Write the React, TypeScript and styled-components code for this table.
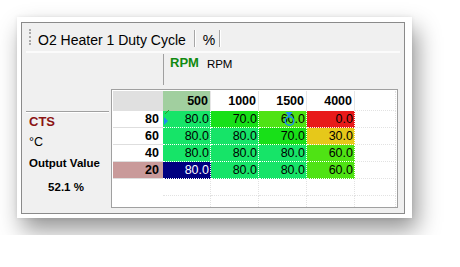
import React from "react";
import styled, { createGlobalStyle } from "styled-components";

const GlobalStyle = createGlobalStyle`
  html, body {
    margin: 0;
    padding: 0;
    background: #ffffff;
  }
  body {
    font-family: "Liberation Sans", Arial, sans-serif;
  }
`;

const Page = styled.div`
  padding: 17px;
`;

const Frame = styled.div`
  box-sizing: border-box;
  width: 395px;
  height: 201px;
  padding: 5px 7px 4px 4px;
  background: #ffffff;
  box-shadow: 5px 12px 22px rgba(0, 0, 0, 0.42), 0 0 4px rgba(0, 0, 0, 0.08);
`;

const Panel = styled.div`
  box-sizing: border-box;
  height: 192px;
  border: 1px solid #8a8a8a;
  background: #f0f0f0;
  display: flex;
  flex-direction: column;
`;

const Toolbar = styled.div`
  box-sizing: border-box;
  height: 30px;
  margin: 0 4px 0 4px;
  padding: 6px 0 0 3px;
  display: flex;
  align-items: flex-start;
  border-bottom: 2px solid #fbfbfb;
`;

const Grip = styled.span`
  width: 0;
  height: 16px;
  border-left: 2px dotted #a9a9a9;
`;

const ToolLabel = styled.span<{ $first?: boolean }>`
  margin-top: 3px;
  padding: 0 ${(p) => (p.$first ? "8px" : "4px")} 0 7px;
  font-size: 14px;
  line-height: 16px;
  color: #000;
  white-space: nowrap;
`;

const ToolSep = styled.span`
  margin-top: 1px;
  width: 1px;
  height: 17px;
  background: #a6a6a6;
  border-right: 1px solid #ffffff;
`;

const Body = styled.div`
  display: grid;
  grid-template-columns: 85px 287px;
  margin-left: 4px;
`;

const Side = styled.div`
  display: flex;
  flex-direction: column;
  padding-top: 58px;
`;

const SideRule = styled.div`
  width: 83px;
  border-top: 1px solid #a0a0a0;
  border-bottom: 1px solid #ffffff;
`;

const AxisName = styled.div`
  margin: 1px 0 0 3px;
  font-size: 13px;
  line-height: 16px;
  font-weight: bold;
  color: #8b1414;
`;

const Unit = styled.div`
  margin: 4px 0 0 3px;
  font-size: 12.5px;
  line-height: 16px;
  color: #000;
`;

const OutLabel = styled.div`
  margin: 5px 0 0 3px;
  font-size: 11.5px;
  line-height: 16px;
  font-weight: bold;
  color: #000;
  white-space: nowrap;
`;

const OutValue = styled.div`
  width: 80px;
  margin-top: 8px;
  text-align: center;
  font-size: 11.5px;
  line-height: 16px;
  font-weight: bold;
  color: #000;
`;

const Main = styled.div`
  display: flex;
  flex-direction: column;
`;

const XAxis = styled.div`
  height: 36px;
  display: flex;
  align-items: flex-start;
  padding-left: 52px;
`;

const XLine = styled.span`
  width: 1px;
  height: 31px;
  margin-top: 1px;
  background: #a0a0a0;
`;

const XName = styled.span`
  margin: 2px 0 0 6px;
  font-size: 13px;
  line-height: 16px;
  font-weight: bold;
  color: #118a11;
`;

const XUnit = styled.span`
  margin: 3px 0 0 8px;
  font-size: 11.5px;
  line-height: 16px;
  color: #000;
`;

const GridBox = styled.div`
  position: relative;
  box-sizing: border-box;
  height: 119px;
  border: 1px solid #a0a0a0;
  padding: 1px;
  background: #ffffff;
  overflow: hidden;
`;

const Grid = styled.div`
  display: grid;
  grid-template-columns: 50px 48px 48px 48px 48px 1fr;
  grid-template-rows: 20px repeat(5, 17px) 17px;
`;

type CellKind = "corner" | "colHead" | "rowHead" | "data" | "empty";

const Cell = styled.div<{ $kind: CellKind; $bg?: string; $fg?: string }>`
  box-sizing: border-box;
  display: flex;
  align-items: center;
  justify-content: flex-end;
  padding-right: ${(p) => (p.$kind === "rowHead" ? "4px" : p.$kind === "colHead" ? "2px" : "1px")};
  font-size: 12.5px;
  font-weight: ${(p) => (p.$kind === "colHead" || p.$kind === "rowHead" ? "bold" : "normal")};
  color: ${(p) => p.$fg || "#000"};
  background: ${(p) =>
    p.$bg || (p.$kind === "corner" ? "#e0e0e0" : "#ffffff")};
  border-right: ${(p) =>
    p.$kind === "data"
      ? "1px dotted #ffffff"
      : p.$kind === "empty"
      ? "1px dotted #e2e2e2"
      : p.$kind === "colHead"
      ? "1px solid #e6e6e6"
      : "none"};
  border-bottom: ${(p) =>
    p.$kind === "data"
      ? "1px dotted #ffffff"
      : p.$kind === "empty"
      ? "1px dotted #e2e2e2"
      : p.$kind === "rowHead"
      ? "1px solid #dedede"
      : "none"};
`;

const Blank = styled.div`
  background: #ffffff;
`;

const Overlay = styled.svg`
  position: absolute;
  left: 0;
  top: 0;
  pointer-events: none;
`;

const cellColour: Record<string, string> = {
  "80.0": "#16e468",
  "70.0": "#18e018",
  "60.0": "#4fe314",
  "30.0": "#e6c81a",
  "0.0": "#e81a1a",
};

const columns = ["500", "1000", "1500", "4000"];
const rows: { load: string; values: string[] }[] = [
  { load: "80", values: ["80.0", "70.0", "60.0", "0.0"] },
  { load: "60", values: ["80.0", "80.0", "70.0", "30.0"] },
  { load: "40", values: ["80.0", "80.0", "80.0", "60.0"] },
  { load: "20", values: ["80.0", "80.0", "80.0", "60.0"] },
];

const activeCol = 0;
const activeRow = 3;

export default function App() {
  return (
    <>
      <GlobalStyle />
      <Page>
        <Frame>
          <Panel>
            <Toolbar>
              <Grip />
              <ToolLabel $first>O2 Heater 1 Duty Cycle</ToolLabel>
              <ToolSep />
              <ToolLabel>%</ToolLabel>
              <ToolSep />
            </Toolbar>
            <Body>
              <Side>
                <SideRule />
                <AxisName>CTS</AxisName>
                <Unit>°C</Unit>
                <OutLabel>Output Value</OutLabel>
                <OutValue>52.1 %</OutValue>
              </Side>
              <Main>
                <XAxis>
                  <XLine />
                  <XName>RPM</XName>
                  <XUnit>RPM</XUnit>
                </XAxis>
                <GridBox>
                  <Grid>
                    <Cell $kind="corner" />
                    {columns.map((c, i) => (
                      <Cell
                        key={c}
                        $kind="colHead"
                        $bg={i === activeCol ? "#a1cf9f" : undefined}
                      >
                        {c}
                      </Cell>
                    ))}
                    <Cell $kind="empty" />
                    {rows.map((r, ri) => (
                      <React.Fragment key={r.load}>
                        <Cell
                          $kind="rowHead"
                          $bg={ri === activeRow ? "#c99a9a" : undefined}
                        >
                          {r.load}
                        </Cell>
                        {r.values.map((v, ci) => {
                          const selected = ri === activeRow && ci === activeCol;
                          return (
                            <Cell
                              key={ci}
                              $kind="data"
                              $bg={selected ? "#000080" : cellColour[v]}
                              $fg={selected ? "#ffffff" : undefined}
                            >
                              {v}
                            </Cell>
                          );
                        })}
                        <Cell $kind="empty" />
                      </React.Fragment>
                    ))}
                    {[0, 1].map((k) => (
                      <React.Fragment key={k}>
                        <Blank />
                        {[0, 1, 2, 3, 4].map((j) => (
                          <Cell key={j} $kind="empty" />
                        ))}
                      </React.Fragment>
                    ))}
                  </Grid>
                  <Overlay width="285" height="117">
                    {/* live operating point markers */}
                    <path d="M53 24 L57 20" stroke="#2a9a2a" strokeWidth="1" fill="none" />
                    <polygon points="52,27 56,31 52,35" fill="#1e8cf0" />
                    <polygon points="173.5,22 180.5,22 177,27" fill="#1e8cf0" />
                    <circle cx="177.5" cy="31" r="4.3" stroke="#1e8cf0" strokeWidth="1.6" fill="none" />
                  </Overlay>
                </GridBox>
              </Main>
            </Body>
          </Panel>
        </Frame>
      </Page>
    </>
  );
}
